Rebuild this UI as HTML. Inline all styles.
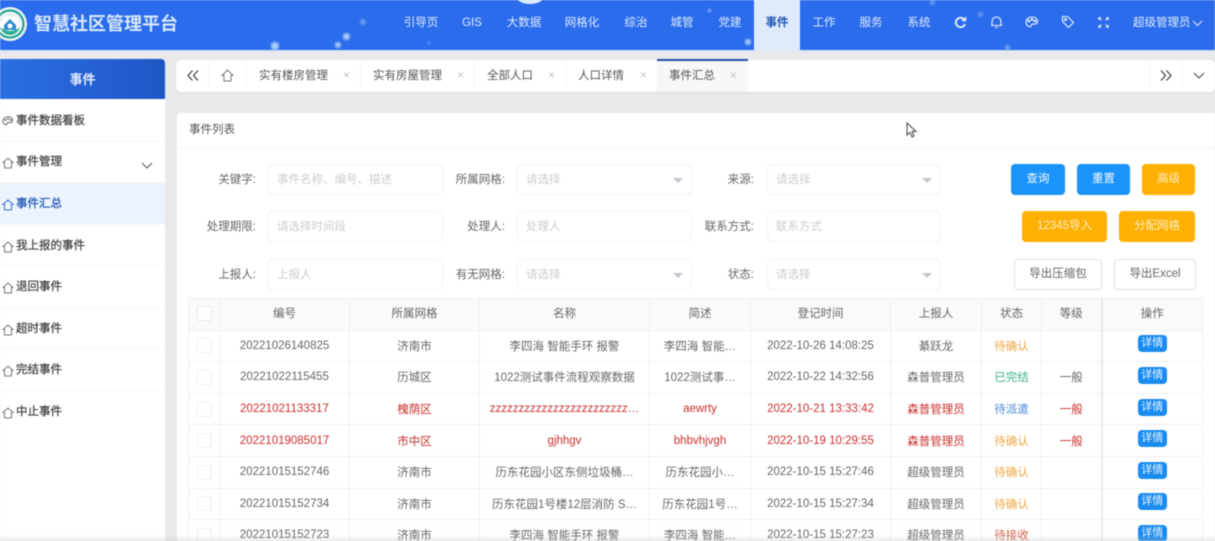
<!DOCTYPE html>
<html lang="zh">
<head>
<meta charset="utf-8">
<style>
*{box-sizing:border-box;margin:0;padding:0}
html,body{width:1215px;height:541px;overflow:hidden;background:#e9e9eb;font-family:"Liberation Sans","Noto Sans CJK SC",sans-serif;font-size:11.5px;color:#555}
#root{position:relative;width:1215px;height:541px;overflow:hidden;filter:blur(.5px)}
.a{position:absolute;white-space:nowrap}
#top{left:0;top:0;width:1215px;height:51px;background:#2a6cec;border-bottom:1px solid #cfe0f6}
.dot{position:absolute;border-radius:50%;background:#a9cdfb;filter:blur(1px)}
.nav{position:absolute;top:15px;height:16px;line-height:16px;color:#dfeafc;text-align:center;transform:translateX(-50%);font-size:11.5px}
#side{left:0;top:59px;width:165px;height:482px;background:#fff;border-top-right-radius:4px}
#sh{left:0;top:59px;width:165px;height:40px;background:linear-gradient(90deg,#2b6fe3,#1f56c5);border-radius:0 4px 0 0;color:#e6effc;font-size:13px;font-weight:bold;text-align:center;line-height:42px}
.mi{position:absolute;left:0;width:165px;height:41.7px;line-height:43px;padding-left:16px;font-size:11.5px;color:#444;border-bottom:1px solid #f6f6f6;-webkit-text-stroke:.25px #444}
.mi svg{position:absolute;left:2px;top:16px}
.mi.on{background:#edf3fd;color:#1f56b5;-webkit-text-stroke:.25px #1f56b5}
#tabs{left:176px;top:60px;width:1039px;height:32px;background:#fff;border-radius:5px;box-shadow:0 1px 2px #ddd}
.tab{position:absolute;top:68px;height:16px;line-height:16px;color:#555;font-size:11.5px}
.x{position:absolute;top:68px;line-height:15px;color:#c4c4c4;font-size:12px}
.vl{position:absolute;top:60px;height:32px;width:1px;background:#f7f7f7}
#card{left:177px;top:113px;width:1038px;height:428px;background:#fff;border-radius:4px 0 0 0}
.lab{position:absolute;width:90px;text-align:right;line-height:16px;font-size:11.5px;color:#666;margin:1px 0 0 -1px}
.inp{position:absolute;width:176px;height:31px;border:1px solid #f0f1f4;border-radius:5px;line-height:30px;padding-left:9px;color:#cbcdd1;background:#fff;font-size:11.5px}
.i2{width:175px;padding-left:8px}
.arr{position:absolute;right:8px;top:13px;width:0;height:0;border:5px solid transparent;border-top:5px solid #c0c4cc;border-bottom:0}
.btn{position:absolute;height:31px;border-radius:4px;text-align:center;line-height:31px;color:#f4f8fe;font-size:11.5px}
.b{background:#1a94fa}.o{background:#ffb000;color:#ffeccb}
.w{background:#fff;border:1px solid #dcdfe6;color:#666;line-height:29px}
table{position:absolute;left:188px;top:298px;width:1014px;border-collapse:collapse;table-layout:fixed;font-size:11.5px;color:#666}
td,th{height:31.6px;border:1px solid #eff0f3;text-align:center;font-weight:normal;padding:0;overflow:hidden;white-space:nowrap;vertical-align:middle}
th{background:#fafafa;color:#666;padding-bottom:2px}
td i{display:block;width:15px;height:15px;border:1px solid #eee;border-radius:2px;margin:0 auto;background:#fff}
th i{display:block;width:15px;height:15px;border:1px solid #e8e8e8;border-radius:2px;margin:0 auto;background:#fff}
tr.r td{color:#c9302c}
.d{display:block;width:29px;height:17px;margin:0 auto;border-radius:4px;background:#1a8cf0;color:#e8f4ff;font-size:11px;line-height:17px;position:relative;top:-2px}
tr.r td .d{color:#e8f4ff}
td.ow,th.ow{border-left:2px solid #e8e9ec}
.cy{color:#f2a743!important}.cg{color:#3bb18a!important}.cb{color:#4a8ad8!important}.cr{color:#d5644e!important}
#fade{left:0;top:535px;width:1215px;height:6px;background:linear-gradient(180deg,rgba(200,200,200,0),rgba(190,190,190,.3))}
</style>
</head>
<body>
<div id="root">
<div class="a" id="top">
  <span class="dot" style="left:271px;top:42px;width:8px;height:8px"></span>
  <span class="dot" style="left:343px;top:33px;width:7px;height:7px"></span>
  <span class="dot" style="left:335px;top:42px;width:6px;height:6px"></span>
  <span class="dot" style="left:360px;top:19px;width:6px;height:6px;opacity:.5"></span>
  <span class="dot" style="left:745px;top:39px;width:6px;height:6px"></span>
  <span class="dot" style="left:708px;top:9px;width:3px;height:3px"></span>
  <span class="dot" style="left:428px;top:42px;width:2px;height:2px"></span>
  <span class="dot" style="left:978px;top:12px;width:5px;height:5px;opacity:.5"></span>
  <span class="dot" style="left:1005px;top:45px;width:5px;height:5px;opacity:.6"></span>
  <span class="dot" style="left:930px;top:0;width:5px;height:5px;opacity:.5"></span>
  <span class="dot" style="left:517px;top:-9px;width:26px;height:13px;background:#dcebff;filter:none"></span>
  <svg class="a" style="left:-5px;top:5px" width="34" height="38" viewBox="0 0 34 38">
    <circle cx="15" cy="19" r="17" fill="#e9f4f1"/>
    <circle cx="15" cy="19" r="13.500" fill="none" stroke="#1d9d8e" stroke-width="2"/>
    <circle cx="15" cy="21" r="10" fill="#fff"/>
    <path d="M5 22c2 6 6 8 10 8s8-2 10-8c-3 3-7 4-10 4s-7-1-10-4z" fill="#2bb08f"/>
    <path d="M9 20l6-6 6 6v5H9z" fill="#2a8fd0"/>
    <circle cx="15" cy="21" r="2.500" fill="#fff"/>
  </svg>
  <div class="a" style="left:34px;top:12px;font-size:18px;font-weight:bold;color:#d9e8fb;line-height:24px">智慧社区管理平台</div>
  <div class="a" style="left:754px;top:0;width:46px;height:51px;background:#dfeafb"></div>
  <div class="nav" style="left:421px">引导页</div>
  <div class="nav" style="left:472px">GIS</div>
  <div class="nav" style="left:524px">大数据</div>
  <div class="nav" style="left:582px">网格化</div>
  <div class="nav" style="left:636px">综治</div>
  <div class="nav" style="left:682px">城管</div>
  <div class="nav" style="left:730px">党建</div>
  <div class="nav" style="left:777px;color:#1f56b5;font-weight:bold">事件</div>
  <div class="nav" style="left:824px">工作</div>
  <div class="nav" style="left:871px">服务</div>
  <div class="nav" style="left:919px">系统</div>
  <svg class="a" style="left:954px;top:16px" width="13" height="13" viewBox="0 0 13 13" fill="none" stroke="#eef4fe" stroke-width="1.800"><path d="M11 8a4.700 4.700 0 1 1-.6-4.200"/><path d="M11.500 1v3.600H8" stroke-width="1.400"/></svg>
  <svg class="a" style="left:990px;top:15px" width="13" height="14" viewBox="0 0 13 14" fill="none" stroke="#eef4fe" stroke-width="1.100"><path d="M2 10.500V6.500a4.500 4.500 0 0 1 9 0v4zM1 10.500h11M5.200 12.500h2.600"/></svg>
  <svg class="a" style="left:1025px;top:16px" width="14" height="12" viewBox="0 0 14 12" fill="none" stroke="#eef4fe" stroke-width="1.100"><path d="M7 1C3.500 1 1 3.400 1 6.300S3.500 11 5.500 10.600c1.500-.3.500-2 1.500-2.500s3 .5 4.500-.3S13.500 1 7 1z"/><circle cx="4" cy="5" r=".8"/><circle cx="7" cy="3.500" r=".8"/><circle cx="10" cy="5" r=".8"/></svg>
  <svg class="a" style="left:1061px;top:15px" width="14" height="14" viewBox="0 0 14 14" fill="none" stroke="#eef4fe" stroke-width="1.100"><path d="M1.500 1.500h5l6 6-5 5-6-6z"/><circle cx="4.500" cy="4.500" r="1"/></svg>
  <svg class="a" style="left:1098px;top:17px" width="11" height="11" viewBox="0 0 11 11" fill="none" stroke="#eef4fe" stroke-width="1"><path d="M.8 3V.8H3M8 .8h2.200V3M10.200 8v2.200H8M3 10.200H.8V8M1 1l2.500 2.500M10 1L7.500 3.500M10 10L7.500 7.500M1 10l2.500-2.500"/></svg>
  <div class="a" style="left:1133px;top:15px;line-height:16px;color:#dfeafc">超级管理员</div>
  <svg class="a" style="left:1192px;top:20px" width="11" height="7" viewBox="0 0 11 7" fill="none" stroke="#dfeafc" stroke-width="1.100"><path d="M1 1l4.500 4.500L10 1"/></svg>
</div>

<div class="a" id="side"></div>
<div class="a" id="sh">事件</div>
<div class="mi" style="top:100px"><svg width="12" height="10" viewBox="0 0 12 10" fill="none" stroke="#666"><path d="M6 .8C3 .8.800 2.800.800 5s2 4 3.700 3.700c1.300-.3.300-1.700 1.300-2.100s2.600.4 3.900-.2S11.500.8 6 .8z"/><circle cx="3.500" cy="4" r=".5"/><circle cx="6" cy="3" r=".5"/><circle cx="8.500" cy="4" r=".5"/></svg>事件数据看板</div>
<div class="mi" style="top:141px"><svg width="12" height="12" viewBox="0 0 12 12" fill="none" stroke="#777"><path d="M6 1L1 5.500h1.500V11h7V5.500H11z"/></svg>事件管理<svg style="left:141px;top:21px" width="12" height="7" viewBox="0 0 12 7" fill="none" stroke="#555" stroke-width="1"><path d="M1 1l5 5 5-5"/></svg></div>
<div class="mi on" style="top:183px"><svg width="12" height="12" viewBox="0 0 12 12" fill="none" stroke="#3a70c4"><path d="M6 1L1 5.500h1.500V11h7V5.500H11z"/></svg>事件汇总</div>
<div class="mi" style="top:224.500px"><svg width="12" height="12" viewBox="0 0 12 12" fill="none" stroke="#777"><path d="M6 1L1 5.500h1.500V11h7V5.500H11z"/></svg>我上报的事件</div>
<div class="mi" style="top:266px"><svg width="12" height="12" viewBox="0 0 12 12" fill="none" stroke="#777"><path d="M6 1L1 5.500h1.500V11h7V5.500H11z"/></svg>退回事件</div>
<div class="mi" style="top:307.500px"><svg width="12" height="12" viewBox="0 0 12 12" fill="none" stroke="#777"><path d="M6 1L1 5.500h1.500V11h7V5.500H11z"/></svg>超时事件</div>
<div class="mi" style="top:349px"><svg width="12" height="12" viewBox="0 0 12 12" fill="none" stroke="#777"><path d="M6 1L1 5.500h1.500V11h7V5.500H11z"/></svg>完结事件</div>
<div class="mi" style="top:390.500px;border-bottom:0"><svg width="12" height="12" viewBox="0 0 12 12" fill="none" stroke="#777"><path d="M6 1L1 5.500h1.500V11h7V5.500H11z"/></svg>中止事件</div>

<div class="a" id="tabs"></div>
<svg class="a" style="left:187px;top:70px" width="12" height="11" viewBox="0 0 12 11" fill="none" stroke="#333" stroke-width="1.100"><path d="M5.500 .5L1 5.500l4.500 5M11 .5L6.500 5.500l4.500 5"/></svg>
<svg class="a" style="left:221px;top:69px" width="13" height="13" viewBox="0 0 13 13" fill="none" stroke="#777"><path d="M6.500 1L1 6.500h2V12h7V6.500h2z"/></svg>
<div class="vl" style="left:208px"></div><div class="vl" style="left:246px"></div><div class="vl" style="left:360px"></div><div class="vl" style="left:474px"></div><div class="vl" style="left:566px"></div>
<div class="tab" style="left:259px">实有楼房管理</div><div class="x" style="left:343px">×</div>
<div class="tab" style="left:373px">实有房屋管理</div><div class="x" style="left:457px">×</div>
<div class="tab" style="left:487px">全部人口</div><div class="x" style="left:548px">×</div>
<div class="tab" style="left:578px">人口详情</div><div class="x" style="left:640px">×</div>
<div class="a" style="left:657px;top:59px;width:91px;height:33px;background:#f7f7f8;border-top:2px solid #1f4fa5"></div>
<div class="tab" style="left:669px">事件汇总</div><div class="x" style="left:730px">×</div>
<div class="vl" style="left:1149px"></div><div class="vl" style="left:1182px"></div>
<svg class="a" style="left:1160px;top:70px" width="12" height="11" viewBox="0 0 12 11" fill="none" stroke="#333" stroke-width="1.100"><path d="M1 .5l4.500 5L1 10.500M6.500 .5l4.500 5-4.500 5"/></svg>
<svg class="a" style="left:1193px;top:72px" width="12" height="7" viewBox="0 0 12 7" fill="none" stroke="#444"><path d="M1 1l5 5 5-5"/></svg>

<div class="a" id="card"></div>
<div class="a" style="left:177px;top:147px;width:1038px;height:1px;background:#f4f4f5"></div>
<div class="a" style="left:189px;top:122px;line-height:16px;color:#555">事件列表</div>

<div class="lab" style="left:167px;top:171px">关键字:</div>
<div class="inp" style="left:267px;top:164px">事件名称、编号、描述</div>
<div class="lab" style="left:416px;top:171px">所属网格:</div>
<div class="inp i2" style="left:517px;top:164px">请选择<span class="arr"></span></div>
<div class="lab" style="left:665px;top:171px">来源:</div>
<div class="inp i2" style="left:767px;top:164px;width:174px">请选择<span class="arr"></span></div>

<div class="lab" style="left:167px;top:218px">处理期限:</div>
<div class="inp" style="left:267px;top:211px">请选择时间段</div>
<div class="lab" style="left:416px;top:218px">处理人:</div>
<div class="inp i2" style="left:517px;top:211px">处理人</div>
<div class="lab" style="left:665px;top:218px">联系方式:</div>
<div class="inp i2" style="left:767px;top:211px;width:174px">联系方式</div>

<div class="lab" style="left:167px;top:266px">上报人:</div>
<div class="inp" style="left:267px;top:259px">上报人</div>
<div class="lab" style="left:416px;top:266px">有无网格:</div>
<div class="inp i2" style="left:517px;top:259px">请选择<span class="arr"></span></div>
<div class="lab" style="left:665px;top:266px">状态:</div>
<div class="inp i2" style="left:767px;top:259px;width:174px">请选择<span class="arr"></span></div>

<div class="btn b" style="left:1011px;top:164px;width:54px">查询</div>
<div class="btn b" style="left:1077px;top:164px;width:53px">重置</div>
<div class="btn o" style="left:1142px;top:164px;width:53px">高级</div>
<div class="btn o" style="left:1022px;top:211px;width:85px">12345导入</div>
<div class="btn o" style="left:1119px;top:211px;width:76px">分配网格</div>
<div class="btn w" style="left:1014px;top:259px;width:88px">导出压缩包</div>
<div class="btn w" style="left:1114px;top:259px;width:82px">导出Excel</div>

<svg class="a" style="left:905px;top:122px" width="13" height="18" viewBox="0 0 13 18"><path d="M2 1v12l3-2.500 2 4.500 2-1-2-4.500h4z" fill="#fff" stroke="#444"/></svg>

<table>
<colgroup><col style="width:31px"><col style="width:130px"><col style="width:130px"><col style="width:170px"><col style="width:101px"><col style="width:140px"><col style="width:91px"><col style="width:60px"><col style="width:60px"><col style="width:101px"></colgroup>
<tr><th><i></i></th><th>编号</th><th>所属网格</th><th>名称</th><th>简述</th><th>登记时间</th><th>上报人</th><th>状态</th><th>等级</th><th class="ow">操作</th></tr>
<tr><td><i></i></td><td>20221026140825</td><td>济南市</td><td>李四海 智能手环 报警</td><td>李四海 智能…</td><td>2022-10-26 14:08:25</td><td>綦跃龙</td><td class="cy">待确认</td><td></td><td class="ow"><span class="d">详情</span></td></tr>
<tr><td><i></i></td><td>20221022115455</td><td>历城区</td><td>1022测试事件流程观察数据</td><td>1022测试事…</td><td>2022-10-22 14:32:56</td><td>森普管理员</td><td class="cg">已完结</td><td>一般</td><td class="ow"><span class="d">详情</span></td></tr>
<tr class="r"><td><i></i></td><td>20221021133317</td><td>槐荫区</td><td>zzzzzzzzzzzzzzzzzzzzzzzz…</td><td>aewrty</td><td>2022-10-21 13:33:42</td><td>森普管理员</td><td class="cb">待派遣</td><td>一般</td><td class="ow"><span class="d">详情</span></td></tr>
<tr class="r"><td><i></i></td><td>20221019085017</td><td>市中区</td><td>gjhhgv</td><td>bhbvhjvgh</td><td>2022-10-19 10:29:55</td><td>森普管理员</td><td class="cy">待确认</td><td>一般</td><td class="ow"><span class="d">详情</span></td></tr>
<tr><td><i></i></td><td>20221015152746</td><td>济南市</td><td>历东花园小区东侧垃圾桶…</td><td>历东花园小…</td><td>2022-10-15 15:27:46</td><td>超级管理员</td><td class="cy">待确认</td><td></td><td class="ow"><span class="d">详情</span></td></tr>
<tr><td><i></i></td><td>20221015152734</td><td>济南市</td><td>历东花园1号楼12层消防 S…</td><td>历东花园1号…</td><td>2022-10-15 15:27:34</td><td>超级管理员</td><td class="cy">待确认</td><td></td><td class="ow"><span class="d">详情</span></td></tr>
<tr><td><i></i></td><td>20221015152723</td><td>济南市</td><td>李四海 智能手环 报警</td><td>李四海 智能…</td><td>2022-10-15 15:27:23</td><td>超级管理员</td><td class="cr">待接收</td><td></td><td class="ow"><span class="d">详情</span></td></tr>
</table>
<div class="a" id="fade"></div>
</div>
</body>
</html>
